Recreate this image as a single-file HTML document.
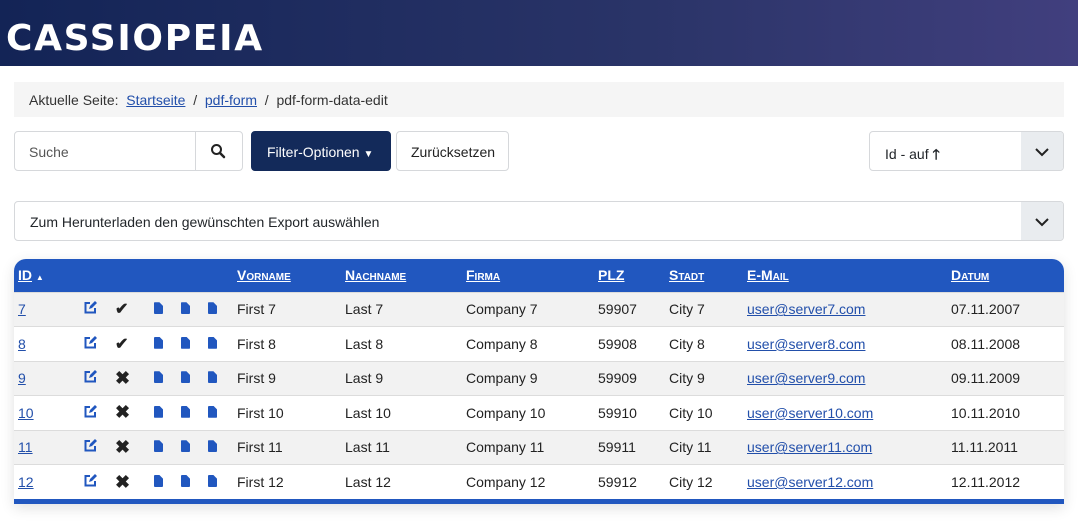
<!DOCTYPE html>
<html><head><meta charset="utf-8"><style>
*{box-sizing:border-box;margin:0;padding:0}
body{width:1078px;height:532px;overflow:hidden;background:#fff;font-family:"Liberation Sans",Arial,sans-serif;position:relative;color:#22262a}
.hdr{position:absolute;left:0;top:0;width:1078px;height:66px;background:linear-gradient(90deg,#132456 0%,#2a3468 60%,#413f7e 100%)}
.logo{position:absolute;left:6px;top:18px;color:#fff;font-size:36px;font-weight:bold;letter-spacing:1.7px;font-family:"DejaVu Sans","Liberation Sans",sans-serif}
.bc{position:absolute;left:14px;top:82px;width:1050px;height:35px;background:#f5f5f5;font-size:14px;padding:10px 0 0 15px;color:#333}
a{color:#224faa;text-decoration:underline}
.box{position:absolute;border:1px solid #d6d8db;border-radius:4px;background:#fff;font-size:14px}
.gray{background:#e9ecef}
table{position:absolute;left:14px;top:259px;width:1050px;border-collapse:collapse;font-size:14px;font-family:"Liberation Sans",Arial,sans-serif}
th{background:#2157bf;color:#fff;height:33px;text-align:left;font-variant:small-caps;font-weight:bold;font-size:14px;padding:0}
th a{color:#fff}
td{height:34.5px;border-top:1px solid #dcdcdc;padding:0;color:#222}
tr:nth-child(even) td{background:#f2f2f2}
.doc{display:inline-block;width:9px;height:12px;background:#2157bf;clip-path:polygon(0 0,60% 0,100% 30%,100% 100%,0 100%);border-radius:1px}
.shadow{position:absolute;left:14px;top:259px;width:1050px;height:245px;border-radius:12px 12px 0 0;box-shadow:0 4px 14px rgba(0,0,0,.12)}
</style></head><body>
<div class="hdr"><div class="logo">CASSIOPEIA</div></div>
<div class="bc">Aktuelle Seite:&nbsp; <a>Startseite</a> &nbsp;/&nbsp; <a>pdf-form</a> &nbsp;/&nbsp; pdf-form-data-edit</div>
<div class="box" style="left:14px;top:131px;width:182px;height:40px;border-radius:4px 0 0 4px;padding:12px 0 0 14px;color:#555">Suche</div>
<div class="box" style="left:195px;top:131px;width:48px;height:40px;border-radius:0 4px 4px 0"><svg width="16" height="16" viewBox="0 0 16 16" style="position:absolute;left:14px;top:11px"><circle cx="6.5" cy="6.5" r="4.5" fill="none" stroke="#222" stroke-width="2"/><path d="M10 10l4 4" stroke="#222" stroke-width="2.5" stroke-linecap="round"/></svg></div>
<div class="box" style="left:251px;top:131px;width:140px;height:40px;background:#132a5a;border-color:#132a5a;color:#fff;padding:12px 0 0 15px">Filter-Optionen <span style="font-size:10px">▼</span></div>
<div class="box" style="left:396px;top:131px;width:113px;height:40px;padding:12px 0 0 14px;color:#222">Zurücksetzen</div>
<div class="box" style="left:869px;top:131px;width:195px;height:40px;padding:12px 0 0 15px;overflow:hidden">Id - auf <b>🡑</b><div class="gray" style="position:absolute;right:0;top:0;width:42px;height:38px"><svg width="14" height="10" viewBox="0 0 14 10" style="position:absolute;left:14px;top:15px"><path d="M1 2l6 6 6-6" fill="none" stroke="#222" stroke-width="2"/></svg></div></div>
<div class="box" style="left:14px;top:201px;width:1050px;height:40px;padding:12px 0 0 15px;overflow:hidden">Zum Herunterladen den gewünschten Export auswählen<div class="gray" style="position:absolute;right:0;top:0;width:42px;height:38px"><svg width="14" height="10" viewBox="0 0 14 10" style="position:absolute;left:14px;top:15px"><path d="M1 2l6 6 6-6" fill="none" stroke="#222" stroke-width="2"/></svg></div></div>
<div class="shadow"></div>
<table>
<colgroup><col style="width:70px"><col style="width:31px"><col style="width:39px"><col style="width:27px"><col style="width:27px"><col style="width:29px"><col style="width:108px"><col style="width:121px"><col style="width:132px"><col style="width:71px"><col style="width:78px"><col style="width:204px"><col></colgroup>
<tr><th style="border-top-left-radius:12px;padding-left:4px"><a>ID</a> <span style="font-size:8px">▲</span></th><th></th><th></th><th></th><th></th><th></th><th><a>Vorname</a></th><th><a>Nachname</a></th><th><a>Firma</a></th><th><a>PLZ</a></th><th><a>Stadt</a></th><th><a>E-Mail</a></th><th style="border-top-right-radius:12px"><a>Datum</a></th></tr>
<tr><td style="padding-left:4px"><a>7</a></td><td><svg width="13" height="13" viewBox="0 0 13 13"><path d="M6 2H1.5v9.5H11V7" fill="none" stroke="#2157bf" stroke-width="2"/><path d="M5 8l1-3 5-5 2 2-5 5z" fill="#2157bf"/></svg></td><td style="font-size:16px;font-weight:bold">✔</td><td><span class="doc"></span></td><td><span class="doc"></span></td><td><span class="doc"></span></td><td>First 7</td><td>Last 7</td><td>Company 7</td><td>59907</td><td>City 7</td><td><a>user@server7.com</a></td><td>07.11.2007</td></tr>
<tr><td style="padding-left:4px"><a>8</a></td><td><svg width="13" height="13" viewBox="0 0 13 13"><path d="M6 2H1.5v9.5H11V7" fill="none" stroke="#2157bf" stroke-width="2"/><path d="M5 8l1-3 5-5 2 2-5 5z" fill="#2157bf"/></svg></td><td style="font-size:16px;font-weight:bold">✔</td><td><span class="doc"></span></td><td><span class="doc"></span></td><td><span class="doc"></span></td><td>First 8</td><td>Last 8</td><td>Company 8</td><td>59908</td><td>City 8</td><td><a>user@server8.com</a></td><td>08.11.2008</td></tr>
<tr><td style="padding-left:4px"><a>9</a></td><td><svg width="13" height="13" viewBox="0 0 13 13"><path d="M6 2H1.5v9.5H11V7" fill="none" stroke="#2157bf" stroke-width="2"/><path d="M5 8l1-3 5-5 2 2-5 5z" fill="#2157bf"/></svg></td><td style="font-size:18px;font-weight:bold">✖</td><td><span class="doc"></span></td><td><span class="doc"></span></td><td><span class="doc"></span></td><td>First 9</td><td>Last 9</td><td>Company 9</td><td>59909</td><td>City 9</td><td><a>user@server9.com</a></td><td>09.11.2009</td></tr>
<tr><td style="padding-left:4px"><a>10</a></td><td><svg width="13" height="13" viewBox="0 0 13 13"><path d="M6 2H1.5v9.5H11V7" fill="none" stroke="#2157bf" stroke-width="2"/><path d="M5 8l1-3 5-5 2 2-5 5z" fill="#2157bf"/></svg></td><td style="font-size:18px;font-weight:bold">✖</td><td><span class="doc"></span></td><td><span class="doc"></span></td><td><span class="doc"></span></td><td>First 10</td><td>Last 10</td><td>Company 10</td><td>59910</td><td>City 10</td><td><a>user@server10.com</a></td><td>10.11.2010</td></tr>
<tr><td style="padding-left:4px"><a>11</a></td><td><svg width="13" height="13" viewBox="0 0 13 13"><path d="M6 2H1.5v9.5H11V7" fill="none" stroke="#2157bf" stroke-width="2"/><path d="M5 8l1-3 5-5 2 2-5 5z" fill="#2157bf"/></svg></td><td style="font-size:18px;font-weight:bold">✖</td><td><span class="doc"></span></td><td><span class="doc"></span></td><td><span class="doc"></span></td><td>First 11</td><td>Last 11</td><td>Company 11</td><td>59911</td><td>City 11</td><td><a>user@server11.com</a></td><td>11.11.2011</td></tr>
<tr><td style="padding-left:4px"><a>12</a></td><td><svg width="13" height="13" viewBox="0 0 13 13"><path d="M6 2H1.5v9.5H11V7" fill="none" stroke="#2157bf" stroke-width="2"/><path d="M5 8l1-3 5-5 2 2-5 5z" fill="#2157bf"/></svg></td><td style="font-size:18px;font-weight:bold">✖</td><td><span class="doc"></span></td><td><span class="doc"></span></td><td><span class="doc"></span></td><td>First 12</td><td>Last 12</td><td>Company 12</td><td>59912</td><td>City 12</td><td><a>user@server12.com</a></td><td>12.11.2012</td></tr>
<tr><td colspan="13" style="height:5px;background:#2157bf;border:0"></td></tr>
</table>
</body></html>
